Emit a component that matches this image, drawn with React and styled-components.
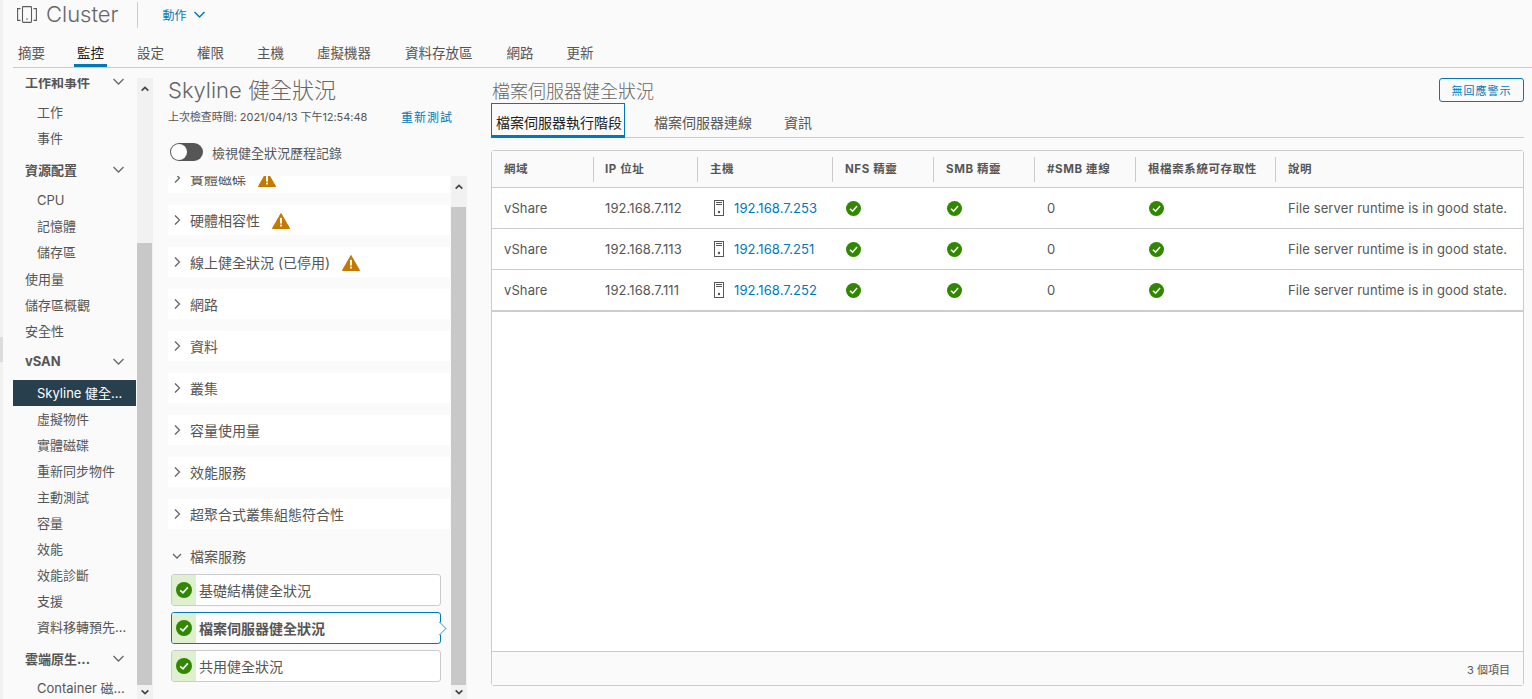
import React from "react";
import styled, { createGlobalStyle } from "styled-components";

const font = `Inter, "Noto Sans CJK TC", sans-serif`;

const Global = createGlobalStyle`
  html, body { margin: 0; padding: 0; height: 100%; background: #fafafa; overflow: hidden; }
  * { box-sizing: border-box; }
  body { font-family: ${font}; color: #565656; font-size: 13px; }
`;

const Page = styled.div`display: flex; width: 1532px; height: 699px; overflow: hidden; background: #fafafa;`;
const Strip = styled.div`
  width: 3px; flex: none;
  background: linear-gradient(#f1f1f1 337px, #dcdcdc 337px, #dcdcdc 362px, #f1f1f1 362px);
`;
const Main = styled.div`flex: 1; min-width: 0; display: flex; flex-direction: column; padding-left: 10px;`;

const Header = styled.header`display: flex; align-items: center; height: 29px; padding-left: 4px;`;
const ClusterName = styled.h1`margin: 0 18px 0 9px; font-size: 22px; line-height: 29px; font-weight: 300; color: #666;`;
const HeaderRule = styled.div`width: 1px; height: 26px; background: #ccc; margin-right: 25px;`;
const ActionLink = styled.a`display: flex; align-items: center; gap: 5px; color: #0079b8; font-size: 12px;`;

const TabBar = styled.nav`display: flex; height: 39px; border-bottom: 1px solid #ccc; padding-left: 2px;`;
const TopTab = styled.a`
  display: block; height: 38px; padding: 14px 3px 0; margin-right: ${p => p.$gap}px;
  font-size: 13.5px; line-height: 20px; color: ${p => (p.$active ? "#222" : "#565656")};
  border-bottom: 3px solid ${p => (p.$active ? "#0079b8" : "transparent")};
`;

const Body = styled.div`flex: 1; min-height: 0; display: flex; overflow: hidden;`;

const NavPane = styled.aside`display: flex; width: 140px; margin-top: 10px; flex: none;`;
const NavClip = styled.div`width: 123px; overflow: hidden; flex: none; margin-right: 1px;`;
const NavList = styled.div`margin-top: -10px;`;
const NavGroup = styled.div`
  display: flex; align-items: center; justify-content: space-between; height: 26px;
  margin: ${p => p.$top ?? 5}px 0 ${p => p.$bottom ?? 4}px; padding: 0 10px 0 12px;
  font-weight: 700; font-size: 13px; color: #565656;
`;
const NavItem = styled.div`
  height: 26px; line-height: 26px; font-size: 13px; white-space: nowrap; overflow: hidden;
  padding-left: ${p => (p.$flat ? 12 : 24)}px;
  margin-top: ${p => p.$top ?? 0}px;
  background: ${p => (p.$active ? "#28404d" : "transparent")};
  color: ${p => (p.$active ? "#fff" : "#565656")};
`;

const Scrollbar = styled.div`
  width: 16px; flex: none; margin-left: ${p => p.$left ?? 0}px; background: #f1f1f1;
  display: flex; flex-direction: column; align-items: center; justify-content: space-between;
  position: relative;
`;
const Thumb = styled.div`position: absolute; left: 0; right: 1px; top: ${p => p.$top}px; bottom: 14px; background: #c8c8c8;`;
const ScrollArrow = styled.div`height: 14px; display: flex; align-items: center; justify-content: center; margin: ${p => (p.$up ? "4px 0 0" : "0")};`;

const MiddlePane = styled.section`width: 299px; flex: none; margin: 10px 0 0 15px; display: flex; flex-direction: column;`;
const PaneTitle = styled.h2`margin: 0; font-size: 22px; line-height: 24px; font-weight: 300; color: #666;`;
const CheckLine = styled.div`display: flex; justify-content: space-between; align-items: center; height: 20px; margin-top: 4px; width: 285px; font-size: 11px; letter-spacing: -.05px;`;
const RetestLink = styled.a`color: #0079b8; font-size: 12px; letter-spacing: 1px;`;
const ToggleRow = styled.div`display: flex; align-items: center; gap: 9px; height: 18px; margin: 17px 0 0 2px; font-size: 13px;`;
const Toggle = styled.span`
  width: 33px; height: 18px; border-radius: 9px; background: #565656; position: relative; display: block;
  &::before { content: ""; position: absolute; left: 1px; top: 1px; width: 16px; height: 16px; border-radius: 50%; background: #fff; }
`;

const TreeArea = styled.div`flex: 1; min-height: 0; display: flex; margin-top: 15px;`;
const TreeClip = styled.div`width: 282px; overflow: hidden; flex: none;`;
const TreeList = styled.div`margin-top: -13px;`;
const TreeRow = styled.div`
  display: flex; align-items: center; height: 30px; margin-bottom: 12px; padding-left: 3px;
  background: ${p => (p.$plain ? "transparent" : "#fff")}; font-size: 14px; color: #565656;
  svg.warn { margin: 2px 0 0 12px; }
`;
const TreeLabel = styled.span`margin-left: 7px;`;
const Cards = styled.div`display: flex; flex-direction: column; gap: 6px; margin: -9px 0 0 3px; width: 270px;`;
const Card = styled.div`
  position: relative; display: flex; align-items: center; height: 32px; background: #fff;
  border: 1px solid ${p => (p.$active ? "#0079b8" : "#ccc")}; border-radius: 3px; font-size: 14px;
  font-weight: ${p => (p.$active ? 700 : 400)};
  ${p => p.$active && `
    &::after {
      content: ""; position: absolute; right: -5px; top: 10px; width: 10px; height: 10px;
      background: #fff; border-top: 1px solid #62aed6; border-right: 1px solid #62aed6;
      transform: rotate(45deg) scale(.9);
    }
  `}
`;
const CardStatus = styled.div`width: 24px; align-self: stretch; background: #dff0d0; display: flex; align-items: center; justify-content: center; margin-right: 3px; border-radius: 2px 0 0 2px;`;

const RightPane = styled.section`flex: 1; min-width: 0; margin: 10px 8px 0 24px; display: flex; flex-direction: column;`;
const RightHead = styled.div`display: flex; justify-content: space-between; align-items: flex-start; height: 25px;`;
const RightTitle = styled.h2`margin: 2px 0 0 1px; font-size: 18px; line-height: 24px; font-weight: 300; color: #666;`;
const OutlineButton = styled.button`
  width: 85px; height: 24px; background: transparent; border: 1px solid #0079b8; border-radius: 3px; color: #0079b8;
  font-family: ${font}; font-size: 11px; letter-spacing: 1px; padding: 0;
`;
const SubTabs = styled.div`display: flex; height: 35px; border-bottom: 1px solid #ccc;`;
const SubTab = styled.a`
  display: block; height: 35px; padding: 7px 2px 0 4px; font-size: 14px; line-height: 24px;
  margin-right: ${p => p.$gap}px; white-space: nowrap;
  color: ${p => (p.$active ? "#222" : "#565656")};
  border: 1px solid ${p => (p.$active ? "#0079b8" : "transparent")};
  border-bottom: 3px solid ${p => (p.$active ? "#0079b8" : "transparent")};
`;

const Grid = styled.div`
  flex: 1; min-height: 0; margin: 12px 0 13px; border: 1px solid #ccc; border-radius: 3px;
  background: #fff; display: flex; flex-direction: column;
`;
const cols = "102px 104px 135px 101px 101px 101px 140px 1fr";
const HeadRow = styled.div`
  display: grid; grid-template-columns: ${cols}; height: 37px; align-items: center; background: #fafafa;
  border-bottom: 1px solid #ccc; flex: none;
`;
const HeadCell = styled.div`
  height: 25px; line-height: 25px; padding-left: 12px; font-size: 11.5px; font-weight: 700; letter-spacing: .6px;
  white-space: nowrap; border-right: ${p => (p.$last ? "none" : "1px solid #ccc")};
  &:nth-child(2) { padding-left: 11px; }
`;
const DataRow = styled.div`
  display: grid; grid-template-columns: ${cols}; height: ${p => (p.$last ? 42 : 41)}px; align-items: center; flex: none;
  border-bottom: ${p => (p.$last ? "2px solid #ccc" : "1px solid #ccc")};
`;
const DataCell = styled.div`
  padding-left: 12px; font-size: 13px; letter-spacing: .1px; white-space: nowrap; display: flex; align-items: center;
  &:nth-child(2) { padding-left: 11px; }
  > svg.status { margin-left: 1px; }
  > svg.server { margin-left: 4px; }
`;
const HostLink = styled.a`color: #0079b8; margin-left: 10px;`;
const GridSpacer = styled.div`flex: 1;`;
const GridFooter = styled.div`
  height: 34px; flex: none; border-top: 1px solid #ccc; background: #fafafa; display: flex;
  align-items: center; justify-content: flex-end; padding-right: 13px; font-size: 11px;
`;

const Chevron = ({ dir = "down", size = 12, color = "#666", width = 1.2 }) => {
  const pts = { down: "2,4 6,8 10,4", up: "2,8 6,4 10,8", right: "4,1.5 8.5,6 4,10.5" }[dir];
  return (
    <svg width={size} height={size} viewBox="0 0 12 12" fill="none">
      <polyline points={pts} stroke={color} strokeWidth={width} />
    </svg>
  );
};

const CheckCircle = ({ size = 16, className }) => (
  <svg className={className} width={size} height={size} viewBox="0 0 16 16">
    <circle cx="8" cy="8" r="8" fill="#318700" />
    <polyline points="4.2,8.3 7,10.8 11.8,5.4" fill="none" stroke="#fff" strokeWidth="1.6" />
  </svg>
);

const Warn = () => (
  <svg className="warn" width="18" height="16" viewBox="0 0 18 16">
    <path d="M9 .5 L17.6 15.5 H.4 Z" fill="#c27b00" stroke="#c27b00" strokeLinejoin="round" />
    <rect x="8.1" y="4.8" width="1.8" height="5.8" fill="#fff" />
    <rect x="8.1" y="11.6" width="1.8" height="1.9" fill="#fff" />
  </svg>
);

const ServerIcon = () => (
  <svg className="server" width="10" height="16" viewBox="0 0 10 16" fill="none">
    <rect x=".5" y=".5" width="9" height="15" stroke="#565656" />
    <line x1="2" y1="2.5" x2="8" y2="2.5" stroke="#565656" />
    <line x1="2" y1="4.5" x2="8" y2="4.5" stroke="#565656" />
    <circle cx="5" cy="12" r="1.2" fill="#565656" />
  </svg>
);

const ClusterIcon = () => (
  <svg width="20" height="17" viewBox="0 0 20 17" fill="none" stroke="#5c5c5c" strokeWidth="1.1">
    <rect x="5.5" y=".6" width="9" height="15.8" rx=".8" />
    <path d="M3.5 2.6 H.6 V14.4 H3.5" />
    <path d="M16.5 2.6 H19.4 V14.4 H16.5" />
    <circle cx="10" cy="13" r=".8" fill="#5c5c5c" stroke="none" />
  </svg>
);

const topTabs = [
  ["摘要", 26], ["監控", 27], ["設定", 27], ["權限", 27], ["主機", 27], ["虛擬機器", 28], ["資料存放區", 28], ["網路", 27], ["更新", 0],
];

const nav = [
  { g: "工作和事件", top: 0, bottom: 5 },
  { i: "工作" }, { i: "事件" },
  { g: "資源配置", bottom: 5 },
  { i: "CPU" }, { i: "記憶體" }, { i: "儲存區" },
  { i: "使用量", flat: true, top: 1 }, { i: "儲存區概觀", flat: true }, { i: "安全性", flat: true },
  { g: "vSAN", top: 4, bottom: 6 },
  { i: "Skyline 健全...", active: true },
  { i: "虛擬物件" }, { i: "實體磁碟" }, { i: "重新同步物件" }, { i: "主動測試" }, { i: "容量" }, { i: "效能" }, { i: "效能診斷" }, { i: "支援" }, { i: "資料移轉預先..." },
  { g: "雲端原生..." },
  { i: "Container 磁..." },
];

const tree = [
  ["實體磁碟", true], ["硬體相容性", true], ["線上健全狀況 (已停用)", true], ["網路"], ["資料"], ["叢集"], ["容量使用量"], ["效能服務"], ["超聚合式叢集組態符合性"],
];

const rows = [
  ["192.168.7.112", "192.168.7.253"],
  ["192.168.7.113", "192.168.7.251"],
  ["192.168.7.111", "192.168.7.252"],
];
const heads = ["網域", "IP 位址", "主機", "NFS 精靈", "SMB 精靈", "#SMB 連線", "根檔案系統可存取性", "說明"];

export default function App() {
  return (
    <Page>
      <Global />
      <Strip />
      <Main>
        <Header>
          <ClusterIcon />
          <ClusterName>Cluster</ClusterName>
          <HeaderRule />
          <ActionLink>動作 <Chevron size={15} color="#0079b8" width={1.2} /></ActionLink>
        </Header>
        <TabBar>
          {topTabs.map(([t, gap]) => (
            <TopTab key={t} $gap={gap} $active={t === "監控"}>{t}</TopTab>
          ))}
        </TabBar>
        <Body>
          <NavPane>
            <NavClip>
              <NavList>
                {nav.map((n, k) =>
                  n.g ? (
                    <NavGroup key={k} $top={n.top} $bottom={n.bottom}>{n.g}<Chevron size={15} width={1} /></NavGroup>
                  ) : (
                    <NavItem key={k} $flat={n.flat} $active={n.active} $top={n.top}>{n.i}</NavItem>
                  )
                )}
              </NavList>
            </NavClip>
            <Scrollbar>
              <Thumb $top={165} />
              <ScrollArrow $up><Chevron dir="up" size={10} color="#444" width={2} /></ScrollArrow>
              <ScrollArrow><Chevron size={10} color="#444" width={2} /></ScrollArrow>
            </Scrollbar>
          </NavPane>

          <MiddlePane>
            <PaneTitle>Skyline 健全狀況</PaneTitle>
            <CheckLine>
              <span>上次檢查時間: 2021/04/13 下午12:54:48</span>
              <RetestLink>重新測試</RetestLink>
            </CheckLine>
            <ToggleRow><Toggle />檢視健全狀況歷程記錄</ToggleRow>
            <TreeArea>
              <TreeClip>
                <TreeList>
                  {tree.map(([t, w]) => (
                    <TreeRow key={t}>
                      <Chevron dir="right" width={1.3} />
                      <TreeLabel>{t}</TreeLabel>
                      {w && <Warn />}
                    </TreeRow>
                  ))}
                  <TreeRow $plain>
                    <Chevron dir="down" width={1.3} />
                    <TreeLabel>檔案服務</TreeLabel>
                  </TreeRow>
                  <Cards>
                    {["基礎結構健全狀況", "檔案伺服器健全狀況", "共用健全狀況"].map((c, k) => (
                      <Card key={c} $active={k === 1}>
                        <CardStatus><CheckCircle /></CardStatus>
                        {c}
                      </Card>
                    ))}
                  </Cards>
                </TreeList>
              </TreeClip>
              <Scrollbar $left={1}>
                <Thumb $top={31} />
                <ScrollArrow $up><Chevron dir="up" size={10} color="#444" width={2} /></ScrollArrow>
                <ScrollArrow><Chevron size={10} color="#444" width={2} /></ScrollArrow>
              </Scrollbar>
            </TreeArea>
          </MiddlePane>

          <RightPane>
            <RightHead>
              <RightTitle>檔案伺服器健全狀況</RightTitle>
              <OutlineButton>無回應警示</OutlineButton>
            </RightHead>
            <SubTabs>
              <SubTab $active $gap={24}>檔案伺服器執行階段</SubTab>
              <SubTab $gap={24}>檔案伺服器連線</SubTab>
              <SubTab $gap={0}>資訊</SubTab>
            </SubTabs>
            <Grid>
              <HeadRow>
                {heads.map((h, k) => <HeadCell key={h} $last={k === heads.length - 1}>{h}</HeadCell>)}
              </HeadRow>
              {rows.map(([ip, host], k) => (
                <DataRow key={ip} $last={k === rows.length - 1}>
                  <DataCell>vShare</DataCell>
                  <DataCell>{ip}</DataCell>
                  <DataCell><ServerIcon /><HostLink>{host}</HostLink></DataCell>
                  <DataCell><CheckCircle size={15} className="status" /></DataCell>
                  <DataCell><CheckCircle size={15} className="status" /></DataCell>
                  <DataCell>0</DataCell>
                  <DataCell><CheckCircle size={15} className="status" /></DataCell>
                  <DataCell>File server runtime is in good state.</DataCell>
                </DataRow>
              ))}
              <GridSpacer />
              <GridFooter>3 個項目</GridFooter>
            </Grid>
          </RightPane>
        </Body>
      </Main>
    </Page>
  );
}
